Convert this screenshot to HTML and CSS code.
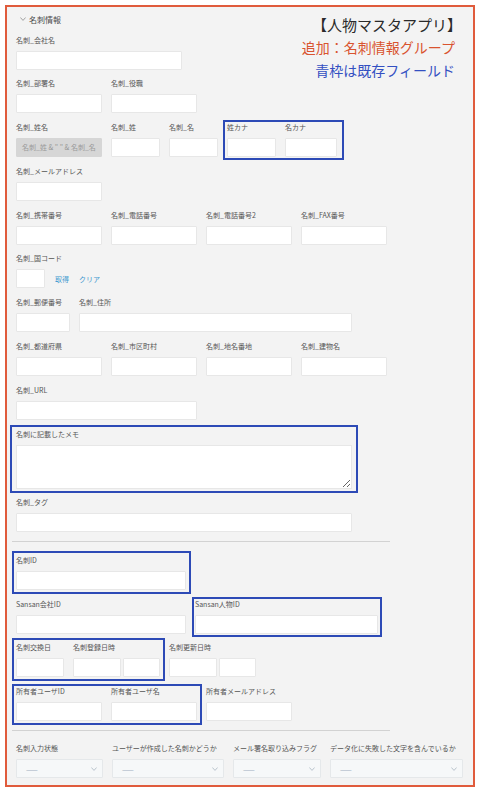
FILE: index.html
```html
<!DOCTYPE html>
<html lang="ja">

<head>
    <meta charset="UTF-8">
    <meta name="viewport" content="width=device-width, initial-scale=1.0">
    <title>人物マスタアプリ - 名刺情報</title>
    <link rel="stylesheet" href="styles.css">
</head>

<body>
    <div class="frame">
        <!-- Legend in the top right corner -->
        <div class="note">
            <p class="note-title">【人物マスタアプリ】</p>
            <p class="note-added">追加：名刺情報グループ</p>
            <p class="note-existing">青枠は既存フィールド</p>
        </div>

        <div class="group-head">
            <svg class="caret" width="6" height="4" viewBox="0 0 6 4"><polyline points="0.4,0.5 3,3.4 5.6,0.5" /></svg>
            <span>名刺情報</span>
        </div>

        <div class="row">
            <div class="field"><label>名刺_会社名</label><input type="text" class="input w-company"></div>
        </div>

        <div class="row">
            <div class="field"><label>名刺_部署名</label><input type="text" class="input w-medium"></div>
            <div class="field"><label>名刺_役職</label><input type="text" class="input w-medium"></div>
        </div>

        <div class="row">
            <div class="field">
                <label>名刺_姓名</label>
                <div class="input input-formula w-medium">名刺_姓 &amp; " " &amp; 名刺_名</div>
            </div>
            <div class="field"><label>名刺_姓</label><input type="text" class="input w-small"></div>
            <div class="field"><label>名刺_名</label><input type="text" class="input w-small"></div>
            <div class="outline outline-snug outline-kana">
                <div class="field"><label>姓カナ</label><input type="text" class="input w-small"></div>
                <div class="field"><label>名カナ</label><input type="text" class="input w-kana"></div>
            </div>
        </div>

        <div class="row">
            <div class="field"><label>名刺_メールアドレス</label><input type="text" class="input w-medium"></div>
        </div>

        <div class="row">
            <div class="field"><label>名刺_携帯番号</label><input type="text" class="input w-medium"></div>
            <div class="field"><label>名刺_電話番号</label><input type="text" class="input w-medium"></div>
            <div class="field"><label>名刺_電話番号2</label><input type="text" class="input w-medium"></div>
            <div class="field"><label>名刺_FAX番号</label><input type="text" class="input w-medium"></div>
        </div>

        <div class="row">
            <div class="field">
                <label>名刺_国コード</label>
                <div class="lookup">
                    <input type="text" class="input w-tiny">
                    <a href="#" class="link">取得</a>
                    <a href="#" class="link">クリア</a>
                </div>
            </div>
        </div>

        <div class="row">
            <div class="field"><label>名刺_郵便番号</label><input type="text" class="input w-zip"></div>
            <div class="field"><label>名刺_住所</label><input type="text" class="input w-address"></div>
        </div>

        <div class="row">
            <div class="field"><label>名刺_都道府県</label><input type="text" class="input w-medium"></div>
            <div class="field"><label>名刺_市区町村</label><input type="text" class="input w-medium"></div>
            <div class="field"><label>名刺_地名番地</label><input type="text" class="input w-medium"></div>
            <div class="field"><label>名刺_建物名</label><input type="text" class="input w-medium"></div>
        </div>

        <div class="row">
            <div class="field"><label>名刺_URL</label><input type="text" class="input w-url"></div>
        </div>

        <div class="row">
            <div class="outline outline-wide">
                <div class="field"><label>名刺に記載したメモ</label><textarea class="memo"></textarea></div>
            </div>
        </div>

        <div class="row">
            <div class="field"><label>名刺_タグ</label><input type="text" class="input w-full"></div>
        </div>

        <div class="divider"></div>

        <div class="row">
            <div class="outline">
                <div class="field"><label>名刺ID</label><input type="text" class="input w-id"></div>
            </div>
        </div>

        <div class="row">
            <div class="field"><label>Sansan会社ID</label><input type="text" class="input w-id"></div>
            <div class="outline outline-snug outline-person">
                <div class="field"><label>Sansan人物ID</label><input type="text" class="input w-person"></div>
            </div>
        </div>

        <div class="row">
            <div class="outline">
                <div class="field"><label>名刺交換日</label><input type="text" class="input w-date"></div>
                <div class="field">
                    <label>名刺登録日時</label>
                    <div class="pair"><input type="text" class="input w-date"><input type="text" class="input w-time"></div>
                </div>
            </div>
            <div class="field">
                <label>名刺更新日時</label>
                <div class="pair"><input type="text" class="input w-date"><input type="text" class="input w-time"></div>
            </div>
        </div>

        <div class="row">
            <div class="outline outline-snug">
                <div class="field"><label>所有者ユーザID</label><input type="text" class="input w-medium"></div>
                <div class="field"><label>所有者ユーザ名</label><input type="text" class="input w-medium"></div>
            </div>
            <div class="field"><label>所有者メールアドレス</label><input type="text" class="input w-medium"></div>
        </div>

        <div class="divider"></div>

        <div class="row row-last">
            <div class="field">
                <label>名刺入力状態</label>
                <div class="select s-state"><span class="select-value">——</span><svg class="select-arrow" width="6" height="4" viewBox="0 0 6 4"><polyline points="0.4,0.5 3,3.4 5.6,0.5" /></svg></div>
            </div>
            <div class="field">
                <label>ユーザーが作成した名刺かどうか</label>
                <div class="select s-user"><span class="select-value">——</span><svg class="select-arrow" width="6" height="4" viewBox="0 0 6 4"><polyline points="0.4,0.5 3,3.4 5.6,0.5" /></svg></div>
            </div>
            <div class="field">
                <label>メール署名取り込みフラグ</label>
                <div class="select s-mail"><span class="select-value">——</span><svg class="select-arrow" width="6" height="4" viewBox="0 0 6 4"><polyline points="0.4,0.5 3,3.4 5.6,0.5" /></svg></div>
            </div>
            <div class="field">
                <label>データ化に失敗した文字を含んでいるか</label>
                <div class="select s-failed"><span class="select-value">——</span><svg class="select-arrow" width="6" height="4" viewBox="0 0 6 4"><polyline points="0.4,0.5 3,3.4 5.6,0.5" /></svg></div>
            </div>
        </div>
    </div>
</body>

</html>
```

FILE: styles.css
```css
* {
    margin: 0;
    padding: 0;
    box-sizing: border-box;
}

body {
    background-color: #fff;
    font-family: "Noto Sans CJK JP", sans-serif;
    color: #555;
}

/* Red frame around the whole group */
.frame {
    position: relative;
    width: 470px;
    margin: 5px 0 0 5px;
    padding: 5px 0 7.5px 9px;
    border: 2px solid #e05b3c;
    background-color: #f3f3f3;
}

.note {
    position: absolute;
    top: 5.5px;
    right: 18px;
    text-align: right;
    font-size: 14px;
    line-height: 23px;
}

.note-title {
    font-size: 15px;
    color: #2a2a2a;
    margin-right: -7px;
}

.note-added {
    color: #d9532f;
}

.note-existing {
    color: #3350c2;
}

.group-head {
    display: flex;
    align-items: center;
    gap: 3px;
    height: 14px;
    margin: 0 0 8.5px 4px;
    font-size: 8px;
    color: #4a4a4a;
}

.caret,
.select-arrow {
    fill: none;
    stroke: #8c8c8c;
    stroke-width: 0.8;
}

/* Form rows */
.row {
    display: flex;
    align-items: flex-start;
    gap: 9px;
    margin-bottom: 8.8px;
}

.row-last {
    margin-bottom: 0;
}

.field {
    display: flex;
    flex-direction: column;
}

.field label {
    height: 11px;
    margin-bottom: 5px;
    font-size: 7px;
    line-height: 11px;
    color: #555;
    white-space: nowrap;
}

.input {
    height: 19px;
    background-color: #fff;
    border: 1px solid #e7e7e7;
    border-radius: 1px;
    outline: none;
}

.input-formula {
    padding-left: 5px;
    background-color: #d6d6d6;
    border-color: #d6d6d6;
    font-size: 7px;
    line-height: 17px;
    color: #9a9a9a;
    white-space: nowrap;
    overflow: hidden;
}

.memo {
    display: block;
    width: 336px;
    height: 44px;
    background-color: #fff;
    border: 1px solid #e7e7e7;
    outline: none;
}

.w-tiny { width: 29px; }
.w-small { width: 49px; }
.w-kana { width: 52px; }
.w-zip { width: 54px; }
.w-medium { width: 86px; }
.w-company { width: 166px; }
.w-id { width: 170px; }
.w-url { width: 181px; }
.w-person { width: 183px; }
.w-address { width: 273px; }
.w-full { width: 336px; }
.w-date { width: 48px; }
.w-time { width: 37px; }

.pair {
    display: flex;
    gap: 2px;
}

.lookup {
    display: flex;
    align-items: center;
    gap: 10px;
}

.link {
    font-size: 7px;
    color: #3b97cf;
    text-decoration: none;
}

/* Blue boxes mark fields that already exist; margins cancel the border so the grid stays put */
.outline {
    display: flex;
    gap: 9px;
    margin: -4px -5px -4px -4px;
    padding: 2px 3px 2px 2px;
    border: 2px solid #2d4ab6;
}

.outline-snug {
    margin-top: -2px;
    padding-top: 0;
}

.outline-kana {
    margin-right: -7px;
    padding-right: 5px;
    margin-bottom: -3px;
    padding-bottom: 1px;
}

.outline-person {
    margin-left: -3px;
    padding-left: 1px;
    margin-right: -4px;
    padding-right: 2px;
    margin-bottom: -3px;
    padding-bottom: 1px;
}

.outline-wide {
    margin-left: -6px;
    margin-right: -6px;
    padding-left: 4px;
    padding-right: 4px;
}

.divider {
    width: 378px;
    height: 1px;
    margin: 3px 0 12.5px -4px;
    background-color: #d2d2d2;
}

/* Picklists */
.select {
    display: flex;
    align-items: center;
    justify-content: space-between;
    height: 18.5px;
    padding: 0 5px 0 9px;
    background-color: #f6f8f9;
    border: 1px solid #e5e8ea;
    border-radius: 1px;
}

.select-value {
    font-size: 7px;
    color: #9fb1c3;
}

.select-arrow {
    stroke: #a9b6c2;
}

.s-state { width: 87px; }
.s-user { width: 112px; }
.s-mail { width: 88px; }
.s-failed { width: 133px; }
```
